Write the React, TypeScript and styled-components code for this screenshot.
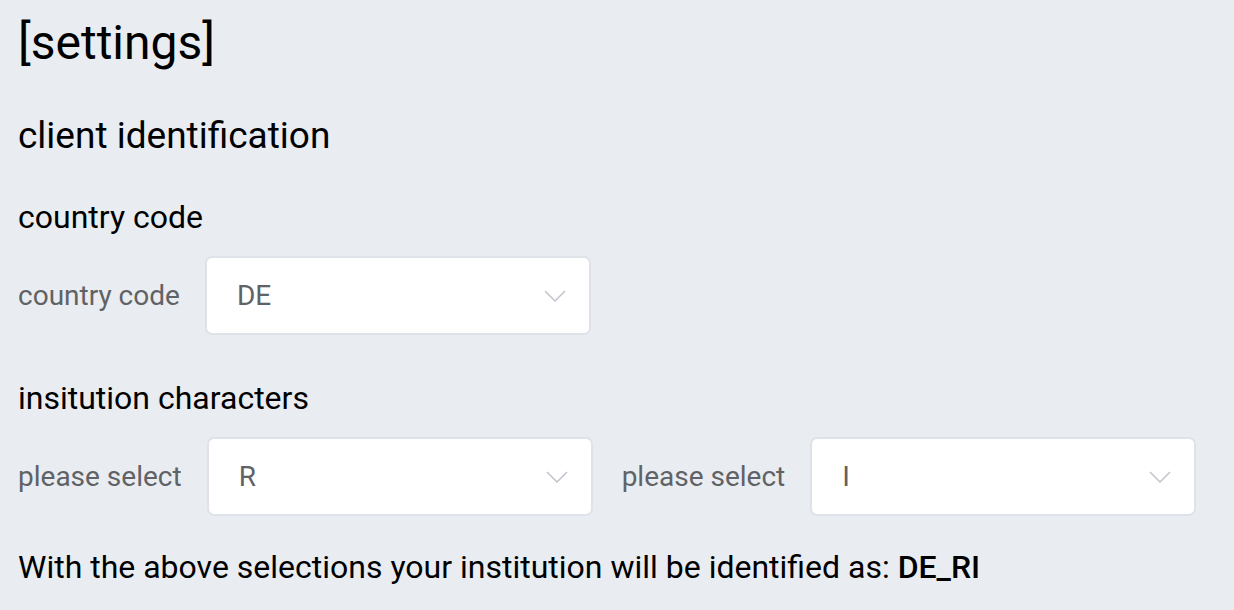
import React from "react";
import styled, { createGlobalStyle } from "styled-components";

const Global = createGlobalStyle`
  html, body { margin: 0; padding: 0; background: #e9edf1; }
  body { font-family: Roboto, "Noto Sans", sans-serif; color: #000; }
`;

const Page = styled.div`
  padding: 15px 18px 0 18px;
  display: flex;
  flex-direction: column;
`;

const Title = styled.h1`
  margin: 0;
  font-size: 48px;
  font-weight: 400;
  line-height: 56px;
`;

const Section = styled.h2`
  margin: 43px 0 0 0;
  font-size: 37px;
  font-weight: 400;
  line-height: 44px;
`;

const SubHead = styled.h3<{ $gap: number }>`
  margin: ${(p) => p.$gap}px 0 0 0;
  font-size: 32px;
  font-weight: 400;
  line-height: 40px;
`;

const Row = styled.div`
  display: flex;
  align-items: center;
  margin-top: 19px;
`;

const Field = styled.div`
  display: flex;
  align-items: center;
  & + & {
    margin-left: 29px;
  }
`;

const Label = styled.span`
  font-size: 28px;
  color: #606266;
  margin-right: 25px;
`;

const SelectBox = styled.div`
  box-sizing: border-box;
  width: 386px;
  height: 79px;
  background: #fff;
  border: 2px solid #dfe3e9;
  border-radius: 7px;
  display: flex;
  align-items: center;
  justify-content: space-between;
  padding: 0 23px 0 30px;
  font-size: 28px;
  color: #606266;
`;

const Chevron = styled.svg`
  width: 22px;
  height: 12px;
`;

const Summary = styled.p`
  margin: 31px 0 0 0;
  font-size: 32px;
  line-height: 40px;
`;

const Code = styled.span`
  font-weight: 500;
`;

const Select = ({ value }: { value: string }) => (
  <SelectBox>
    <span>{value}</span>
    <Chevron viewBox="0 0 22 12" fill="none">
      <path d="M1 1 L11 11 L21 1" stroke="#c0c4cc" strokeWidth="1.5" />
    </Chevron>
  </SelectBox>
);

export default function App() {
  return (
    <>
      <Global />
      <Page>
        <Title>[settings]</Title>
        <Section>client identification</Section>
        <SubHead $gap={39}>country code</SubHead>
        <Row>
          <Field>
            <Label>country code</Label>
            <Select value="DE" />
          </Field>
        </Row>
        <SubHead $gap={43}>insitution characters</SubHead>
        <Row>
          <Field>
            <Label>please select</Label>
            <Select value="R" />
          </Field>
          <Field>
            <Label>please select</Label>
            <Select value="I" />
          </Field>
        </Row>
        <Summary>
          With the above selections your institution will be identified as: <Code>DE_RI</Code>
        </Summary>
      </Page>
    </>
  );
}
